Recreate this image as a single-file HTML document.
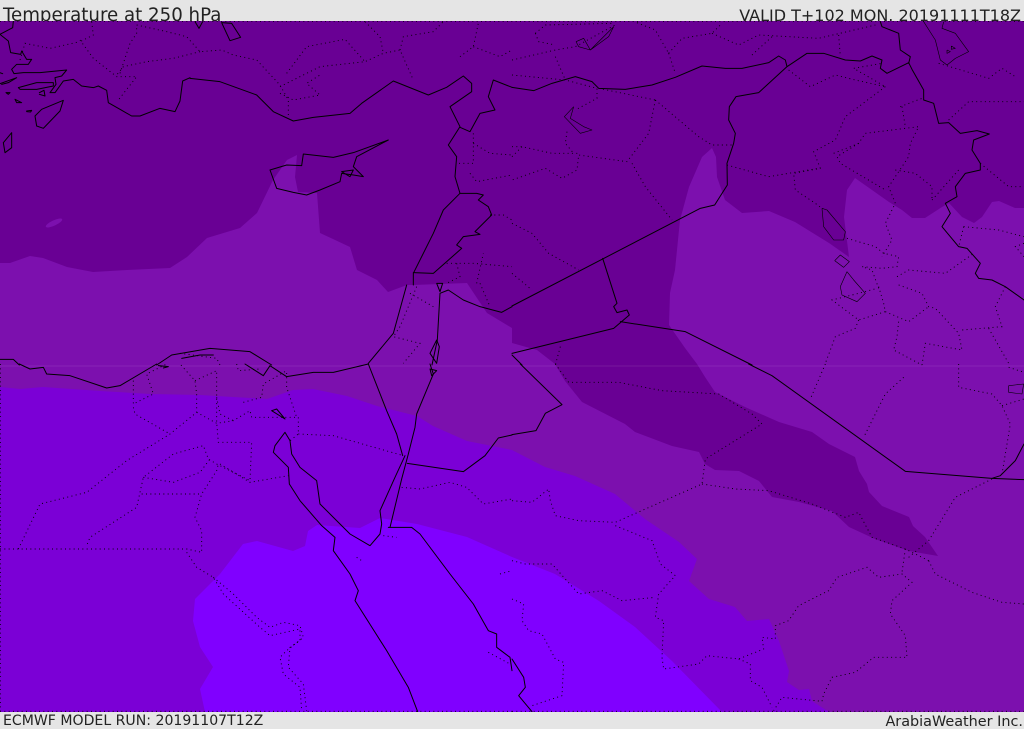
<!DOCTYPE html>
<html><head><meta charset="utf-8"><title>Temperature at 250 hPa</title>
<style>
html,body{margin:0;padding:0;background:#e5e5e5}
#w{position:relative;width:1024px;height:729px;overflow:hidden;background:#e5e5e5;font-family:"DejaVu Sans",sans-serif;color:#222}
#h{position:absolute;left:0;top:0;width:1024px;height:21px;overflow:hidden}
.t{position:absolute;white-space:nowrap;line-height:1}
svg{position:absolute;left:0;top:21px}
.s polyline,.s path{fill:none;stroke:#000;stroke-width:3;stroke-linejoin:round;stroke-linecap:round}
.d polyline{fill:none;stroke:#000;stroke-width:2.8;stroke-dasharray:3 10;stroke-linecap:butt}
.n polyline{fill:none;stroke:#000;stroke-width:1.8;stroke-linejoin:round}
</style></head><body><div id="w">
<div id="h">
<div class="t" style="left:3px;top:7px;font-size:18.2px">Temperature at 250 hPa</div>
<div class="t" style="right:3px;top:8px;font-size:16px">VALID T+102 MON. 20191111T18Z</div>
</div>
<svg width="1024" height="691" viewBox="0 21 1024 691">
<rect x="0" y="21" width="1024" height="691" fill="#7c10ae"/>
<polygon fill="#690094" points="0,21 1024,21 1024,208 1015,208 999,201 992,202 982,217 974,223 962,217 949,203 942,207 925,218 912,218 902,210 889,202 872,190 855,178 847,190 844,217 849,257 829,243 795,222 769,211 742,213 725,200 717,177 716,157 712,148 702,157 689,187 680,220 675,270 670,293 669,325 685,348 697,364 705,377 715,392 745,407 779,422 812,432 829,444 855,457 859,471 867,484 869,492 882,506 909,517 913,526 925,537 938,556 909,551 875,539 849,527 832,511 799,502 772,497 759,481 739,471 715,470 705,464 699,452 672,446 635,432 625,424 582,402 565,381 555,364 537,350 512,343 512,328 487,313 467,283 413,285 407,285 388,292 377,280 357,270 350,247 333,239 320,233 317,193 298,192 295,177 297,155 287,160 273,180 257,213 240,228 207,238 187,257 170,268 127,270 93,272 67,267 43,258 30,256 10,263 0,263"/>
<ellipse cx="54" cy="223" rx="9" ry="2.6" fill="#7c10ae" transform="rotate(-25 54 223)"/>
<polygon fill="#7b00d6" points="0,387 20,389 43,387 100,391 150,394 200,395 233,397 267,399 293,390 313,389 347,396 377,406 417,416 433,426 467,441 512,450 545,467 575,476 615,494 645,519 679,542 697,559 689,581 709,599 735,607 747,621 769,619 779,641 789,671 787,682 799,690 809,689 812,701 829,712 0,712"/>
<polygon fill="#8000ff" points="205,712 200,689 213,667 200,647 193,621 195,599 220,574 243,544 257,541 293,551 305,546 308,531 317,525 360,528 380,518 417,524 467,537 512,557 555,574 599,601 635,627 672,661 722,712"/>
<rect x="0" y="365.5" width="1024" height="1" fill="#fff" opacity=".09"/>

<!-- Aegean / SW Turkey -->
<g transform="translate(0,21) scale(.33333)">
<g class="s">
<polyline points="40,0 38,20 0,40 25,60 32,95 62,100 65,90 80,115 95,115 85,130 50,130 35,145 42,158 70,155 120,155 200,147 185,165 165,170 168,190 150,215 165,215 190,180 220,175 245,195 280,200 295,195 320,208 325,245 360,265 395,285 420,285 480,262 525,272 540,240 548,180 570,170"/>
<polyline points="55,200 110,185 160,185 160,195 110,205 60,205 55,200"/>
<polyline points="0,188 50,170 25,185 5,190"/>
<polyline points="118,215 132,208 135,225 118,220"/>
<polyline points="110,315 105,285 125,265 190,238 180,270 130,322 110,315"/>
<polyline points="10,365 35,335 35,380 15,395 10,365"/>
<polyline points="18,215 30,215 25,220 18,215"/>
<polyline points="45,235 65,245 50,245 45,235"/>
<polyline points="80,270 95,268 92,273 80,272"/>
<polyline points="0,155 8,158"/>
</g>
</g>

<!-- Quadrant 1 -->
<g transform="scale(.33333)">
<g class="d">
<polyline points="240,120 280,175 350,230 410,230 355,300"/>
<polyline points="60,180 75,130 150,145 240,125"/>
<polyline points="275,65 280,105 240,125"/>
<polyline points="410,75 500,95 560,110 600,155 665,150 700,165 770,180 840,255 865,300 865,350"/>
<polyline points="600,155 520,175 440,185 370,200 350,225"/>
<polyline points="360,220 390,130 410,100 410,75"/>
<polyline points="840,260 960,200 1095,185 1150,160 1200,150 1240,240"/>
<polyline points="860,220 920,140 1035,118 1095,185"/>
<polyline points="840,280 880,300 960,285 920,250 960,225"/>
<polyline points="1095,65 1140,110 1150,160"/>
<polyline points="1200,150 1210,110 1300,95 1330,65"/>
<polyline points="1380,170 1420,140 1435,70"/>
<polyline points="1420,140 1500,170 1536,150"/>
<polyline points="1420,400 1420,490 1370,490"/>
<polyline points="1420,430 1470,460 1536,465"/>
<polyline points="1410,520 1430,545 1536,525"/>
<polyline points="1470,645 1510,645 1536,660"/>
<polyline points="1340,790 1420,790 1536,800"/>
<polyline points="1370,790 1380,830 1340,850"/>
<polyline points="1430,850 1450,760"/>
<polyline points="1440,850 1470,920"/>
<polyline points="1250,860 1200,980 1180,1010 1260,1030 1210,1090"/>
<polyline points="1230,880 1300,920"/>
<polyline points="540,1060 650,1075 660,1095"/>
<polyline points="0,64 3072,64" />
</g>
<g class="s">
<polyline points="570,235 660,245 770,285 820,335 880,363 940,352 1050,340 1085,310 1180,243 1285,285 1340,262 1390,228 1415,250 1415,275 1350,320 1380,380 1345,435 1370,470 1365,530 1380,580 1330,630 1300,700 1240,820 1240,855"/>
<polyline points="1380,382 1410,395 1440,340 1485,330 1465,290 1480,240 1536,262"/>
<polyline points="1380,580 1430,580 1450,585 1435,600 1465,620 1475,645 1425,695 1440,703 1390,710 1370,735 1385,745 1340,785 1300,820 1240,818"/>
<polyline points="910,462 1000,472 1060,458 1165,420 1070,470 1060,500 1090,530 1060,525 1025,520 1020,545 960,570 920,585 880,577 830,565 810,510 860,495 905,497 910,462"/>
<polyline points="1220,855 1180,1000 1105,1090"/>
<polyline points="1536,920 1505,937 1440,920 1390,900 1345,870 1320,880 1312,1020 1296,1095"/>
<polyline points="1310,850 1328,850 1320,875 1310,850"/>
<polyline points="1290,1060 1310,1020 1318,1040 1310,1090 1290,1060"/>
<polyline points="470,1095 515,1065 630,1045 750,1055 815,1095"/>
<polyline points="545,1075 600,1065 640,1065"/>
<polyline points="0,1078 40,1078 58,1095"/>
<polyline points="665,68 695,70 722,112 690,122 665,68"/>
<polyline points="585,65 597,85 608,65"/>
<polyline points="1025,515 1060,510 1050,530 1025,515"/>
</g>
</g>

<!-- Quadrant 2 -->
<g transform="translate(512,0) scale(.33333)">
<g class="d">
<polyline points="0,180 130,150 190,140 315,72"/>
<polyline points="130,170 160,240"/>
<polyline points="70,100 100,75 300,70"/>
<polyline points="70,100 80,125 130,135"/>
<polyline points="470,160 510,115 600,100 630,70"/>
<polyline points="600,100 680,135 740,105 920,115 1090,75"/>
<polyline points="470,160 490,220"/>
<polyline points="375,68 430,90 470,160"/>
<polyline points="720,165 780,110"/>
<polyline points="980,105 985,170"/>
<polyline points="830,210 895,260 970,225 1030,240 1120,260 1025,205 1110,190"/>
<polyline points="1120,260 1000,350 970,420 905,455 925,505 845,520 850,570 910,610 930,625"/>
<polyline points="965,460 1040,430 1060,400 1220,380 1195,430 1190,470 1130,560 1150,610 1120,670 1140,720 1110,770"/>
<polyline points="1040,430 975,470 985,490 1120,570"/>
<polyline points="1165,320 1230,295"/>
<polyline points="1170,320 1180,380"/>
<polyline points="1150,510 1210,520 1260,560 1260,600"/>
<polyline points="1405,490 1490,560 1536,560"/>
<polyline points="1310,360 1370,305 1536,305"/>
<polyline points="1280,190 1430,235 1470,205 1510,230"/>
<polyline points="1260,600 1340,510"/>
<polyline points="430,300 410,400 345,485 200,465 195,510 150,535 100,505 0,540"/>
<polyline points="430,300 560,410 600,435 665,435"/>
<polyline points="360,490 400,560 480,660"/>
<polyline points="0,440 30,440 120,460 200,460"/>
<polyline points="0,470 30,440"/>
<polyline points="165,395 160,430 185,460"/>
<polyline points="0,225 160,240 255,265 255,295 190,330"/>
<polyline points="260,265 430,300"/>
<polyline points="0,670 60,700 110,760 200,810"/>
<polyline points="0,820 60,870"/>
<polyline points="645,495 770,530 920,505"/>
<polyline points="1005,715 1090,740 1115,760 1160,770 1155,800 1110,805 1050,800 1080,810 1100,865"/>
<polyline points="1155,830 1190,810 1300,820 1385,760"/>
<polyline points="1100,860 1115,910 1120,935 1040,960 960,900 1040,880 1095,865"/>
<polyline points="1040,960 1030,985 970,1010 940,1090"/>
<polyline points="1160,855 1230,880 1250,920 1270,925 1340,1000 1350,1050 1240,1030 1230,1095"/>
<polyline points="1120,935 1190,965 1250,920"/>
<polyline points="1160,965 1155,1010 1145,1050 1230,1095"/>
<polyline points="1355,680 1340,740"/>
<polyline points="1355,680 1460,690 1536,710"/>
<polyline points="1480,860 1450,920 1470,980 1350,990"/>
<polyline points="1430,985 1490,1090"/>
<polyline points="1536,730 1510,740 1536,770"/>
<polyline points="145,1040 130,1095"/>
</g>
<g class="s">
<polyline points="0,262 65,272 120,250 190,230 240,245 260,265 340,268 420,255 490,232 570,198 640,205 690,205 770,188 800,168 820,180 825,200 885,160 935,160 1000,180 1045,183 1080,168 1110,180 1105,205 1125,220 1190,188 1200,208 1235,270 1235,300 1265,310 1280,370 1310,368 1345,400 1395,392 1432,402 1385,420 1380,450 1405,490 1405,510 1360,520 1330,560 1335,590 1300,610 1315,640 1290,680 1340,740 1365,745 1405,790 1390,820 1400,835 1440,840 1480,860 1536,900"/>
<polyline points="825,200 740,278 672,290 652,320 650,360 670,400 665,430 645,490 646,555 608,615 565,625 0,918"/>
<polyline points="272,775 315,910 305,920 315,938 345,930 352,945 305,985 0,1060"/>
<polyline points="325,965 520,995 720,1095"/>
<polyline points="1105,65 1110,80 1160,100 1165,150 1195,170 1190,190"/>
<polyline points="0,1065 30,1095"/>
</g>
<g class="n">
<polyline points="1235,65 1270,120 1285,180 1305,195 1330,175 1370,155 1330,100 1290,85 1295,65"/>
<polyline points="192,125 215,115 235,150 280,105 305,80 290,110 235,150 200,140 192,125"/>
<polyline points="185,320 157,350 205,400 240,390 215,380 175,355 185,320"/>
<polyline points="930,625 945,630 1000,695 995,720 965,720 935,680 930,625"/>
<polyline points="968,782 985,765 1012,785 995,802 968,782"/>
<polyline points="1005,815 985,860 990,885 1035,905 1060,880 1025,840 1005,815"/>
<polyline points="1305,150 1315,155 1305,160 1305,150"/>
<polyline points="1318,138 1330,145 1318,148 1318,138"/>
</g>
</g>

<!-- Quadrant 3 -->
<g transform="translate(0,364) scale(.33333)">
<g class="d">
<polyline points="400,50 400,120 460,90 440,30 500,0"/>
<polyline points="0,555 560,555 605,565 605,500 585,460 605,390 650,320 655,300"/>
<polyline points="55,555 120,420 260,385 380,290 510,210 590,145 590,90 585,50 540,0"/>
<polyline points="400,130 405,150 510,210"/>
<polyline points="585,50 650,20 650,100 650,175 655,235 755,235 750,350 650,300 625,285 610,245 520,270 430,340 410,430 270,520 260,545"/>
<polyline points="430,340 520,355 600,325 630,285"/>
<polyline points="425,390 600,390"/>
<polyline points="590,145 650,178 700,170 750,140 755,160 890,160 860,70 860,20"/>
<polyline points="650,100 660,150 700,170"/>
<polyline points="730,115 785,100 790,60 860,20"/>
<polyline points="660,300 750,355 865,335"/>
<polyline points="895,210 1000,215 1210,275"/>
<polyline points="895,160 895,210 870,230"/>
<polyline points="1205,370 1260,375 1350,355 1400,370 1450,420 1536,405"/>
<polyline points="560,565 590,610 640,640 670,690 780,790 810,815 900,795 900,830 870,850 865,910 910,960 920,1040"/>
<polyline points="640,640 700,690 770,760 810,790 850,775 900,785 910,820 860,860 840,880 850,930 900,970 905,1040"/>
<polyline points="1465,865 1530,900"/>
<polyline points="1150,515 1190,520"/>
<polyline points="1070,580 1085,590"/>
<polyline points="1500,630 1536,620"/>
<polyline points="1,0 1,1042"/>
<polyline points="0,1042 1536,1042"/>
<polyline points="710,0 715,20 780,15"/>
</g>
<g class="s">
<polyline points="58,0 90,15 130,10 140,30 210,35 320,72 360,65 470,0"/>
<polyline points="735,0 790,35 810,5 860,38 940,25 1000,25 1105,0"/>
<polyline points="1105,0 1160,140 1190,210 1208,275"/>
<polyline points="1290,0 1300,30 1250,150 1245,190 1225,270 1205,345 1170,490"/>
<polyline points="1215,275 1185,340 1140,440 1145,480 1140,510 1110,545 1050,510 1020,480 960,420 950,350 900,310 875,270 870,230 855,205 825,245 820,265 865,310 868,360 900,410 965,485 1005,520 1000,560 1050,630 1075,680 1065,710 1160,860 1225,970 1253,1043"/>
<polyline points="1165,490 1235,490 1260,510 1350,630 1420,720 1465,800 1490,810 1490,850 1530,880 1536,920"/>
<polyline points="1222,298 1390,323 1455,275 1495,222 1536,213"/>
<polyline points="815,140 830,135 855,165 815,140"/>
<polyline points="475,5 505,8 490,12"/>
<polyline points="1290,15 1310,20 1295,35 1290,15"/>
</g>
</g>

<!-- Quadrant 4 -->
<g transform="translate(512,364) scale(.33333)">
<g class="d">
<polyline points="130,0 170,55 320,55 450,80 620,90 720,150 750,180 580,285 570,360 400,435 310,475 200,470 130,455 115,410 110,375 60,415 0,410"/>
<polyline points="570,360 670,375 770,380 900,420 1000,460 1040,445 1080,520 1180,555 1250,590"/>
<polyline points="310,485 420,530 445,600 490,635 440,690 430,760 455,770 450,880 455,915 560,900 585,875 680,885 755,855 750,820 790,825 790,785 830,770 860,725 950,680 975,640 1065,610 1100,640 1170,630 1200,655 1140,710 1135,750 1180,815 1185,880 1085,880 1030,925 960,940 935,990 930,1012 810,1000 785,1040"/>
<polyline points="680,885 715,900 715,950 750,970 780,1030"/>
<polyline points="1180,555 1170,625"/>
<polyline points="1190,580 1250,530 1330,400 1440,345"/>
<polyline points="1250,590 1270,630 1380,685 1470,715 1536,720"/>
<polyline points="0,590 40,600 120,600 200,690 270,680 330,710 430,700"/>
<polyline points="0,705 35,720 30,770 50,800 90,810 130,885 155,895 150,995 60,1025"/>
<polyline points="940,0 895,105"/>
<polyline points="1175,40 1120,90 1055,220"/>
<polyline points="1340,0 1340,70 1440,90 1470,125 1495,180 1470,330"/>
<polyline points="1470,125 1536,105"/>
<polyline points="1490,10 1536,25"/>
<polyline points="0,1042 1536,1042"/>
</g>
<g class="s">
<polyline points="710,0 780,35 1180,322 1440,343 1536,347"/>
<polyline points="1440,343 1465,335 1510,290 1536,240"/>
<polyline points="25,0 150,122 100,148 72,200 0,212"/>
<polyline points="0,885 35,940 40,970 20,995 60,1043"/>
</g>
<g class="n">
<polyline points="1490,65 1535,60 1530,90 1490,85 1490,65"/>
</g>
</g>
</svg>
<div class="t" style="left:3px;top:714px;font-size:14.08px">ECMWF MODEL RUN: 20191107T12Z</div>
<div class="t" style="right:1px;top:714.5px;font-size:14.4px">ArabiaWeather Inc.</div>
</div></body></html>
